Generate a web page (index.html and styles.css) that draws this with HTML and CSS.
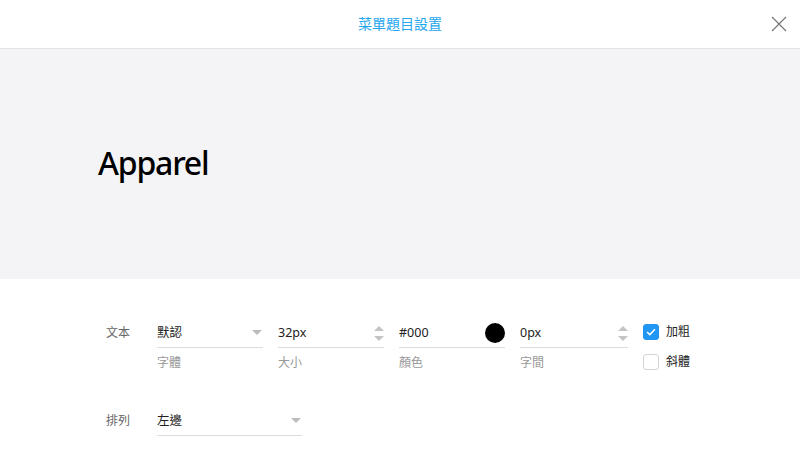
FILE: index.html
```html
<!DOCTYPE html>
<html lang="zh-Hant">
<head>
<meta charset="utf-8">
<link rel="stylesheet" href="styles.css">
</head>
<body>
<header class="topbar">
  <div class="title">菜單題目設置</div>
  <button class="close" aria-label="close">
    <svg width="16" height="16" viewBox="0 0 16 16"><path d="M1 1 L15 15 M15 1 L1 15" stroke="#777" stroke-width="1.2" fill="none"/></svg>
  </button>
</header>
<section class="preview">
  <div class="sample">Apparel</div>
</section>
<section class="form">
  <div class="row">
    <div class="label">文本</div>
    <div class="field w106">
      <div class="value">默認<span class="caret"></span></div>
      <div class="caption">字體</div>
    </div>
    <div class="field w106">
      <div class="value">32px<span class="spin"><i class="up"></i><i class="down"></i></span></div>
      <div class="caption">大小</div>
    </div>
    <div class="field w106">
      <div class="value">#000<span class="swatch"></span></div>
      <div class="caption">顏色</div>
    </div>
    <div class="field w108">
      <div class="value">0px<span class="spin"><i class="up"></i><i class="down"></i></span></div>
      <div class="caption">字間</div>
    </div>
    <div class="checks">
      <label class="check"><span class="box on"><svg width="10" height="8" viewBox="0 0 10 8"><path d="M1 4 L3.8 6.6 L9 1.2" stroke="#fff" stroke-width="1.5" fill="none"/></svg></span>加粗</label>
      <label class="check"><span class="box"></span>斜體</label>
    </div>
  </div>
  <div class="row row2">
    <div class="label">排列</div>
    <div class="field w145">
      <div class="value">左邊<span class="caret"></span></div>
    </div>
  </div>
</section>
</body>
</html>
```
FILE: styles.css
```css
* { box-sizing: border-box; }
body {
  margin: 0;
  width: 800px;
  height: 470px;
  background: #fff;
  font-family: "Noto Sans", "Noto Sans CJK TC", sans-serif;
  color: #222;
  overflow: hidden;
}
.topbar {
  height: 49px;
  border-bottom: 1px solid #e4e4e6;
  display: flex;
  align-items: center;
  justify-content: center;
  position: relative;
}
.title {
  font-size: 14px;
  color: #1ea7ee;
  line-height: 20px;
  margin-top: -1px;
}
.close {
  position: absolute;
  right: 13px;
  top: 16px;
  width: 16px;
  height: 16px;
  padding: 0;
  border: 0;
  background: none;
  display: block;
}
.close svg { display: block; }
.preview {
  height: 230px;
  background: #f4f4f6;
  display: flex;
  align-items: center;
  padding-left: 98px;
}
.sample {
  font-size: 32px;
  font-weight: 500;
  letter-spacing: -1.2px;
  color: #000;
  line-height: 40px;
  margin-top: -2px;
}
.form {
  padding: 41px 0 0 106px;
}
.row {
  display: flex;
  gap: 15px;
}
.row2 { margin-top: 36px; }
.label {
  width: 36px;
  font-size: 12px;
  color: #666;
  line-height: 26px;
}
.field { display: flex; flex-direction: column; }
.w106 { width: 106px; }
.w108 { width: 108px; }
.w145 { width: 145px; }
.value {
  height: 28px;
  border-bottom: 1px solid #dcdcdc;
  font-size: 12.5px;
  line-height: 22px;
  color: #222;
  display: flex;
  align-items: center;
  justify-content: space-between;
  padding-bottom: 2px;
}
.caption {
  margin-top: 6px;
  font-size: 12px;
  line-height: 18px;
  color: #999;
}
.caret {
  width: 0;
  height: 0;
  border-left: 5px solid transparent;
  border-right: 5px solid transparent;
  border-top: 5px solid #bbb;
  margin-right: 1px;
}
.spin {
  display: flex;
  flex-direction: column;
  gap: 5px;
  margin-bottom: -1px;
}
.spin i {
  display: block;
  width: 0;
  height: 0;
  border-left: 5px solid transparent;
  border-right: 5px solid transparent;
}
.spin .up { border-bottom: 5px solid #c4c4c4; }
.spin .down { border-top: 5px solid #c4c4c4; }
.swatch {
  width: 20px;
  height: 20px;
  border-radius: 50%;
  background: #000;
  margin-bottom: -1px;
}
.checks {
  display: flex;
  flex-direction: column;
  gap: 14px;
  padding-top: 4px;
}
.check {
  display: flex;
  align-items: center;
  gap: 7px;
  font-size: 12px;
  line-height: 16px;
  color: #222;
}
.box {
  width: 16px;
  height: 16px;
  border-radius: 3px;
  border: 1px solid #d4d4d4;
  background: #fff;
  display: flex;
  align-items: center;
  justify-content: center;
}
.box.on {
  background: #2196f3;
  border-color: #2196f3;
}
.box svg { display: block; }
```
